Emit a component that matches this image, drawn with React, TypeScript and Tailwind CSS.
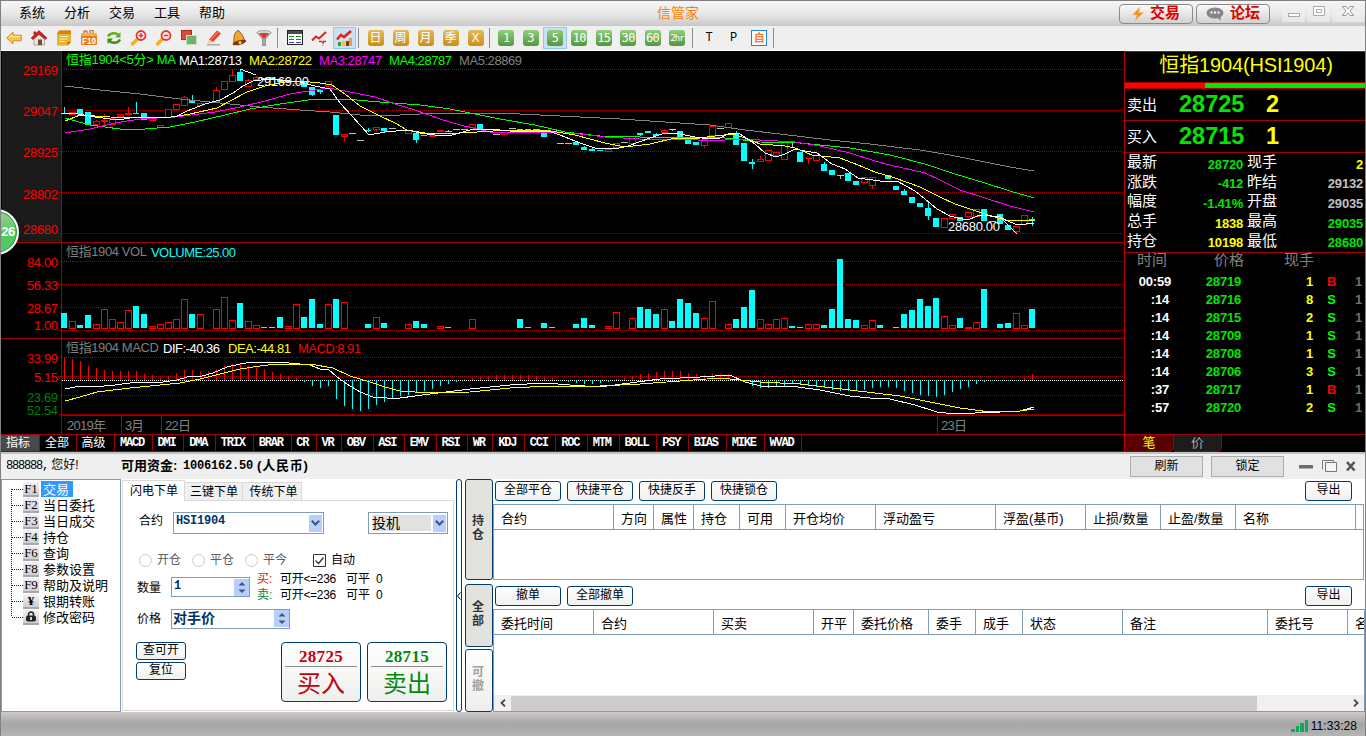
import type { ReactNode } from "react";
import clsx from "clsx";

/* ---------- Market data ---------- */

type Kind = "u" | "d" | "n"; // up (hollow red), down (cyan), flat
// index, kind, body top, body bottom, high, low
type Candle = [number, Kind, number, number, number?, number?];

const CANDLES: Candle[] = [
  [0, "d", 113, 114, 107], [1, "u", 112, 115], [2, "d", 109, 114], [3, "d", 112, 125], [4, "u", 121, 125, 120],
  [5, "u", 120, 122, 114, 126], [6, "u", 118, 125], [7, "u", 114, 117], [8, "u", 113, 115, 107], [9, "d", 113, 114, 102],
  [10, "d", 113, 120], [11, "u", 118, 121], [12, "u", 125, 128], [13, "u", 109, 118], [14, "u", 104, 110],
  [15, "u", 97, 106, 96], [16, "d", 100, 103, 95], [17, "u", 103, 106], [19, "u", 90, 102, 87], [20, "u", 81, 90],
  [21, "u", 75, 82, 70], [22, "d", 72, 81, 69], [23, "u", 80, 87, 79], [24, "u", 77, 80, 76], [25, "n", 78, 79],
  [26, "d", 77, 80], [27, "d", 79, 82], [28, "u", 81, 83], [29, "u", 83, 86, 82], [30, "d", 82, 87],
  [31, "d", 87, 95, 87, 96], [32, "d", 90, 92, 89, 94], [33, "u", 81, 87], [34, "d", 115, 135], [35, "u", 134, 137, 134, 141],
  [36, "n", 133, 134], [37, "n", 140, 141], [38, "d", 130, 131, 128, 132], [39, "u", 127, 130, 127, 132], [40, "d", 128, 131, 128, 132],
  [41, "n", 128, 129], [42, "n", 130, 131], [43, "u", 130, 134], [44, "d", 133, 140, 133, 143], [45, "d", 135, 136],
  [46, "u", 135, 137], [47, "u", 130, 132], [48, "n", 131, 132, 130], [49, "n", 129, 130], [50, "n", 129, 130],
  [51, "u", 124, 128], [52, "d", 124, 129], [53, "u", 131, 132], [54, "n", 134, 135], [55, "u", 132, 135],
  [56, "n", 128, 129], [57, "d", 129, 130], [58, "d", 129, 130], [59, "n", 129, 130], [60, "d", 132, 137],
  [62, "n", 143, 144], [63, "n", 143, 144], [64, "d", 142, 145], [65, "d", 147, 150, 146], [66, "d", 149, 151, 148],
  [67, "d", 150, 151], [68, "u", 149, 152], [69, "u", 143, 148], [70, "n", 142, 143], [71, "u", 136, 144],
  [72, "d", 133, 135, 133, 136], [73, "d", 131, 133], [74, "d", 134, 136, 133], [75, "u", 130, 133, 129, 134], [76, "n", 129, 130, 129, 131],
  [77, "d", 131, 137], [78, "d", 138, 144], [79, "d", 142, 145], [80, "u", 139, 146, 139, 148], [81, "u", 126, 136],
  [82, "n", 128, 129], [83, "u", 123, 128], [84, "d", 133, 145, 131], [85, "d", 143, 161], [86, "d", 162, 164, 159, 169],
  [87, "u", 159, 162, 156], [88, "u", 150, 161], [89, "u", 152, 156], [90, "u", 142, 160], [91, "n", 142, 143, 142, 147],
  [92, "d", 152, 162], [93, "u", 158, 159, 158, 164], [94, "u", 155, 161], [95, "d", 164, 171, 162], [96, "d", 170, 175],
  [97, "n", 175, 176, 175, 179], [98, "d", 173, 181], [99, "d", 181, 185], [100, "u", 177, 183], [101, "u", 177, 186, 177, 189],
  [103, "d", 175, 179], [104, "d", 186, 190], [105, "d", 191, 195, 189], [106, "d", 197, 203], [107, "d", 203, 207],
  [108, "d", 208, 216, 203, 220], [109, "d", 218, 227], [110, "u", 218, 228], [111, "u", 214, 219], [112, "d", 217, 221],
  [113, "u", 212, 217], [114, "u", 209, 217], [115, "d", 209, 221], [116, "n", 221, 222], [117, "d", 214, 224],
  [118, "d", 225, 230], [119, "u", 226, 232, 226, 234], [120, "u", 215, 225], [121, "d", 219, 221, 217, 226],
];

// index, kind, top of the bar
const VOLUMES: [number, Kind, number][] = [
  [0, "d", 313], [1, "u", 321], [2, "d", 325], [3, "d", 315], [4, "u", 324], [5, "u", 309], [6, "u", 319], [7, "u", 322],
  [8, "u", 310], [9, "d", 306], [10, "d", 314], [11, "u", 326], [12, "u", 324], [13, "u", 322], [14, "u", 319], [15, "u", 299],
  [16, "d", 314], [17, "u", 314], [19, "u", 309], [20, "u", 297], [21, "u", 320], [22, "d", 303], [23, "u", 321], [24, "u", 325],
  [25, "d", 327], [26, "d", 327], [27, "d", 317], [28, "u", 326], [29, "u", 304], [30, "d", 317], [31, "d", 299], [32, "d", 324],
  [33, "u", 304], [34, "d", 299], [35, "u", 302], [38, "d", 324], [39, "u", 317], [40, "d", 323], [43, "u", 324], [44, "d", 321],
  [45, "d", 324], [47, "u", 326], [48, "d", 327], [51, "u", 319], [57, "d", 319], [58, "d", 327], [60, "d", 323], [61, "d", 327],
  [64, "d", 324], [65, "d", 318], [66, "d", 325], [68, "u", 326], [69, "u", 312], [71, "u", 318], [72, "d", 307], [73, "d", 309],
  [74, "d", 314], [75, "u", 309], [76, "d", 321], [77, "d", 299], [78, "d", 303], [79, "d", 313], [80, "u", 318], [81, "u", 301],
  [83, "u", 324], [84, "d", 319], [85, "d", 307], [86, "d", 290], [87, "u", 319], [88, "u", 324], [89, "u", 319], [90, "u", 318],
  [91, "d", 326], [92, "d", 327], [93, "u", 324], [94, "u", 324], [95, "d", 325], [96, "d", 309], [97, "d", 259], [98, "d", 319],
  [99, "d", 320], [100, "u", 325], [101, "u", 320], [102, "d", 325], [104, "d", 327], [105, "d", 314], [106, "d", 310], [107, "d", 299],
  [108, "d", 306], [109, "d", 298], [110, "u", 316], [111, "u", 325], [112, "d", 318], [113, "u", 327], [114, "u", 322], [115, "d", 289],
  [117, "d", 324], [118, "d", 323], [119, "u", 313], [120, "u", 325], [121, "d", 309],
];

// end of each MACD bar, zero line at 380
const MACD = [
  357, 359, 361, 366, 368, 370, 371, 371, 371, 371, 374, 375, 378, 376, 373, 370, 370, 371, 371, 369,
  366, 364, 364, 366, 368, 369, 372, 374, 376, 378, 382, 386, 388, 386, 399, 406, 409, 411, 409, 405,
  402, 398, 396, 395, 393, 391, 389, 386, 384, 382, 379, 378, 377, 376, 375, 375, 375, 375, 375, 376,
  377, 378, 381, 382, 383, 384, 384, 383, 382, 379, 378, 376, 374, 373, 372, 371, 371, 371, 373, 374,
  375, 374, 374, 374, 377, 382, 386, 388, 388, 387, 386, 384, 384, 386, 387, 388, 390, 391, 391, 391,
  390, 388, 387, 387, 388, 391, 393, 395, 396, 397, 395, 392, 389, 387, 384, 382, 381, 381, 381, 381, 378, 374,
];

const MA_LINES = [
  {
    color: "#808080",
    points: "65,86 100,90 140,94 180,99 220,103 260,107 300,110 330,112 370,116 400,115 440,113 500,113 560,116 620,119 680,123 710,125 745,130 780,134 830,140 870,144 920,150 950,155 980,161 1010,167 1034,171",
  },
  {
    color: "#00ff00",
    points: "65,118 90,125 120,129 145,129 170,127 195,122 225,115 250,109 280,104 315,99 345,99 380,102 420,105 450,109 470,113 500,119 535,125 565,132 600,136 640,137 700,137 725,138 760,142 800,143 850,148 890,155 925,164 955,174 985,183 1010,191 1034,198",
  },
  {
    color: "#ff00ff",
    points: "65,133 90,129 115,123 140,119 175,117 215,112 240,107 265,101 290,94 315,90 328,88 345,91 375,97 395,104 415,110 440,119 460,125 490,132 545,132 580,134 605,137 640,139 680,139 715,141 735,139 760,140 795,142 820,146 850,153 875,161 890,165 925,173 940,180 960,190 985,198 1010,206 1034,212",
  },
  {
    color: "#ffff00",
    points: "65,121 80,115 110,117 165,118 190,114 217,108 230,101 247,92 265,86 285,82 300,81 320,83 332,85 345,94 360,106 380,116 395,123 407,130 425,133 460,133 510,130 545,130 575,135 605,143 625,147 650,144 675,138 700,138 715,136 733,134 745,138 760,144 785,146 795,148 812,155 840,158 858,165 875,172 895,178 920,187 940,197 955,204 970,209 985,214 1005,220 1034,220",
  },
  {
    color: "#ffffff",
    points: "62,113 78,114 95,117 118,120 130,118 150,117 165,118 177,116 187,111 205,104 220,100 233,93 243,86 253,81 270,79 300,82 315,86 330,89 340,103 352,116 369,135 385,132 408,130 420,133 435,135 452,135 470,130 490,129 510,131 548,131 560,135 580,143 595,148 615,149 628,146 650,138 665,133 680,134 695,137 710,139 720,138 730,133 740,134 755,144 765,153 776,157 785,154 795,149 805,151 817,153 832,164 845,169 858,178 880,181 897,181 915,191 925,199 937,209 950,216 962,219 970,219 980,215 1000,217 1010,222 1018,225 1034,223",
  },
];

const DIF_LINE =
  "65,389 80,386 93,387 115,385 137,382 163,382 177,380 187,377 202,376 213,373 227,367 240,364 253,362 277,362 300,364 310,365 320,369 328,369 337,377 347,384 360,392 373,397 387,398 400,398 430,394 470,389 510,385 545,383 570,385 600,387 630,383 660,379 700,377 730,375 745,382 765,387 790,386 820,390 850,396 870,398 890,399 915,405 937,412 955,414 975,413 1000,412 1020,411 1034,407";
const DEA_LINE =
  "65,401 80,397 97,392 130,388 160,385 180,383 200,379 220,374 240,369 260,366 277,364 310,364 333,368 350,376 370,382 385,387 400,391 430,393 470,392 510,388 550,386 600,386 640,384 680,381 720,378 760,382 800,384 850,390 900,396 930,402 960,408 990,412 1020,411 1034,409";

/* ---------- Chart ---------- */

const DARK_RED = "#a00000";

interface LabelProps {
  x: number;
  y: number;
  w: number;
  fill: string;
  size?: number;
  children: string;
}

function Label({ x, y, w, fill, size = 13, children }: LabelProps) {
  return (
    <text x={x} y={y} textLength={w} fill={fill} fontSize={size} className="font-['Liberation_Sans','Noto_Sans_CJK_SC',sans-serif]">
      {children}
    </text>
  );
}

function colorOf(kind: Kind) {
  if (kind === "u") return "#ff0000";
  return kind === "d" ? "#00ffff" : "#c0c0c0";
}

function Chart() {
  return (
    <svg width={1123} height={383} viewBox="1 51 1123 383" className="block shrink-0">
      <g shapeRendering="crispEdges">
        <rect x={1} y={51} width={1123} height={383} fill="#000" />
        <rect x={2} y={51} width={59} height={191} fill="#1a1a1a" />

        {/* Grid */}
        {[69, 110, 151, 192, 233, 261, 284, 307, 330, 357, 376, 395, 414].map((y) => (
          <line key={y} x1={58} x2={1124} y1={y + 0.5} y2={y + 0.5} stroke={DARK_RED} strokeDasharray="1 1" />
        ))}
        <line x1={62} x2={1124} y1={380.5} y2={380.5} stroke="#fff" strokeDasharray="1 1" />
        {[242, 338, 415].map((y) => (
          <line key={y} x1={y === 415 ? 61 : 1} x2={1124} y1={y + 0.5} y2={y + 0.5} stroke={DARK_RED} />
        ))}
        <line x1={61.5} x2={61.5} y1={51} y2={434} stroke={DARK_RED} />
        {[121.5, 161.5, 937.5].map((x) => (
          <line key={x} x1={x} x2={x} y1={415} y2={434} stroke={DARK_RED} />
        ))}

        {/* Candles */}
        {CANDLES.map(([i, kind, top, bottom, high = top, low = bottom]) => {
          const x = 61 + i * 8;
          const color = colorOf(kind);
          return (
            <g key={i}>
              {high < top && <rect x={x + 3} y={high} width={1} height={top - high} fill={color} />}
              {low > bottom && <rect x={x + 3} y={bottom} width={1} height={low - bottom} fill={color} />}
              {kind === "u" && bottom - top > 2 ? (
                <rect x={x + 0.5} y={top + 0.5} width={6} height={bottom - top - 1} fill="#000" stroke={color} />
              ) : (
                <rect x={x} y={top} width={kind === "d" ? 6 : 7} height={bottom - top} fill={color} />
              )}
            </g>
          );
        })}
        {MA_LINES.map((line) => (
          <polyline key={line.color} points={line.points} fill="none" stroke={line.color} />
        ))}
        <path d="M240 69L256 75M1000 217L1017 234" stroke="#fff" />

        {/* Volume */}
        {VOLUMES.map(([i, kind, top]) =>
          kind === "d" ? (
            <rect key={i} x={61 + i * 8} y={top} width={6} height={328 - top} fill="#00ffff" />
          ) : (
            <rect key={i} x={61.5 + i * 8} y={top + 0.5} width={6} height={328 - top} fill="#000" stroke="#ff0000" />
          )
        )}

        {/* MACD */}
        {MACD.map((end, i) => (
          <rect
            key={i}
            x={64 + i * 8}
            y={Math.min(end, 380)}
            width={1}
            height={Math.abs(380 - end)}
            fill={end < 380 ? "#ff0000" : "#00ffff"}
          />
        ))}
        <polyline points={DIF_LINE} fill="none" stroke="#fff" />
        <polyline points={DEA_LINE} fill="none" stroke="#ff0" />
      </g>

      {/* Price axis */}
      <Label x={23} y={75} w={35} fill="#f00">29169</Label>
      <Label x={23} y={116} w={35} fill="#f00">29047</Label>
      <Label x={23} y={157} w={35} fill="#f00">28925</Label>
      <Label x={23} y={199} w={35} fill="#f00">28802</Label>
      <Label x={23} y={234} w={35} fill="#f00">28680</Label>
      <Label x={27} y={267} w={31} fill="#f00">84.00</Label>
      <Label x={27} y={290} w={31} fill="#f00">56.33</Label>
      <Label x={27} y={313} w={31} fill="#f00">28.67</Label>
      <Label x={34} y={330} w={24} fill="#f00">1.00</Label>
      <Label x={27} y={363} w={31} fill="#f00">33.99</Label>
      <Label x={34} y={382} w={24} fill="#f00">5.15</Label>
      <Label x={27} y={402} w={31} fill="#008000">23.69</Label>
      <Label x={27} y={415} w={31} fill="#008000">52.54</Label>

      {/* Legends */}
      <Label x={66} y={64} w={110} fill="#0f0">恒指1904&lt;5分&gt; MA</Label>
      <Label x={179} y={65} w={63} fill="#fff">MA1:28713</Label>
      <Label x={249} y={65} w={63} fill="#ff0">MA2:28722</Label>
      <Label x={319} y={65} w={63} fill="#f0f">MA3:28747</Label>
      <Label x={389} y={65} w={63} fill="#0f0">MA4:28787</Label>
      <Label x={459} y={65} w={63} fill="#808080">MA5:28869</Label>
      <Label x={257} y={86} w={52} fill="#fff">29169.00</Label>
      <Label x={948} y={231} w={52} fill="#fff">28680.00</Label>
      <Label x={66} y={256} w={81} fill="#808080">恒指1904 VOL</Label>
      <Label x={151} y={257} w={85} fill="#0ff">VOLUME:25.00</Label>
      <Label x={66} y={352} w={93} fill="#808080">恒指1904 MACD</Label>
      <Label x={163} y={353} w={57} fill="#fff">DIF:-40.36</Label>
      <Label x={228} y={353} w={63} fill="#ff0">DEA:-44.81</Label>
      <Label x={298} y={353} w={63} fill="#f00">MACD:8.91</Label>

      {/* Dates */}
      <Label x={67} y={430} w={39} fill="#808080">2019年</Label>
      <Label x={125} y={430} w={19} fill="#808080">3月</Label>
      <Label x={165} y={430} w={26} fill="#808080">22日</Label>
      <Label x={941} y={430} w={26} fill="#808080">23日</Label>
    </svg>
  );
}

/* ---------- Title bar and toolbar ---------- */

function TitleBar() {
  return (
    <div className="h-[25px] shrink-0 flex items-center bg-gradient-to-b from-[#f6f6f6] via-[#e8e8e8] to-[#c9c9c9]">
      <div className="flex w-[656px] pl-[18px] text-[13px] -mt-0.5">
        {["系统", "分析", "交易", "工具", "帮助"].map((item) => (
          <span key={item} className="w-[45px]">{item}</span>
        ))}
      </div>
      <span className="flex-1 text-[14px] text-[#ff8000]">信管家</span>
      <div className="flex gap-[3px]">
        <button className="w-[74px] h-5 rounded-[4px] border border-[#8a8a8a] bg-gradient-to-b from-[#fafafa] to-[#d2d2d2] flex items-center justify-center gap-1.5 text-[15px] font-bold text-[#e00000]">
          <svg width="12" height="16" viewBox="0 0 12 16">
            <path d="M8 1L0.500 9H5L2.500 15L11.500 6.500H6.500Z" fill="#f88a1c" stroke="#fbc27a" strokeWidth=".6" />
          </svg>
          交易
        </button>
        <button className="w-[74px] h-5 rounded-[4px] border border-[#8a8a8a] bg-gradient-to-b from-[#fafafa] to-[#d2d2d2] flex items-center justify-center gap-1.5 text-[15px] font-bold text-[#e00000]">
          <svg width="18" height="14" viewBox="0 0 18 14">
            <ellipse cx="9" cy="6" rx="8.500" ry="5.500" fill="#868686" />
            <path d="M10 10L15 13.500L14 8Z" fill="#868686" />
            <path d="M4.500 5.500h2M8 5.500h2M11.500 5.500h2" stroke="#fff" strokeWidth="2" />
          </svg>
          论坛
        </button>
      </div>
      <div className="flex gap-0.5 ml-3 mr-px mb-0.5">
        <span className="w-[23px] h-[19px] bg-[#efefef]/70 flex items-end justify-center pb-1">
          <svg width="12" height="5"><rect x=".5" y=".5" width="11" height="3" fill="#fff" stroke="#aaa" /></svg>
        </span>
        <span className="w-[23px] h-[19px] bg-[#efefef]/70 flex items-center justify-center pb-1">
          <svg width="12" height="10"><path d="M.5.5h11v9H.5zM3.500 3.500h5v3h-5z" fill="#fff" stroke="#aaa" /></svg>
        </span>
        <span className="w-[32px] h-[19px] bg-[#efefef]/70 flex items-center justify-center pb-1">
          <svg width="12" height="10">
            <path d="M.5.5h3.500L6 3L8 .5h3.500L8 5l3.500 4.500H8L6 7L4 9.500H.5L4 5z" fill="#fff" stroke="#999" />
          </svg>
        </span>
      </div>
    </div>
  );
}

function Magnifier({ plus }: { plus?: boolean }) {
  return (
    <svg width="16" height="16" viewBox="0 0 16 16">
      <path d="M1.500 14L6.500 9" stroke="#f6b21c" strokeWidth="3.500" strokeLinecap="round" />
      <circle cx="10" cy="5.500" r="4.500" fill="#fbeaea" stroke="#e5372d" strokeWidth="1.800" />
      <path d={plus ? "M7.800 5.500h4.400M10 3.300v4.400" : "M7.800 5.500h4.400"} stroke="#e5372d" strokeWidth="1.500" />
    </svg>
  );
}

const TOOL_ICONS: ReactNode[] = [
  <svg width="16" height="16" viewBox="0 0 16 16">
    <path d="M.7 8L7 2V5.200H15.300V10.800H7V14Z" fill="#fcc63c" stroke="#c98a17" strokeWidth=".9" />
    <path d="M3 7.500L6 5V6.500H14" stroke="#fff0a8" fill="none" />
  </svg>,
  <svg width="16" height="16" viewBox="0 0 16 16">
    <path d="M3 7.500V15H13.500V7.500L8 3Z" fill="#e6e6e6" stroke="#8b8b8b" strokeWidth=".7" />
    <path d="M2.500 1.500h2.500v3H2.500z" fill="#b52020" />
    <path d="M0 8L8 .5L16 8L14 9.500L8 4.500L2 9.500Z" fill="#d81e1e" stroke="#8e0f0f" strokeWidth=".5" />
    <path d="M7 9.500h4V15H7z" fill="#7b4a2a" />
  </svg>,
  <svg width="16" height="16" viewBox="0 0 16 16">
    <path d="M3 .5H15V12L11.500 15.500H1V4Z" fill="#eab32b" />
    <path d="M3 .5H15V4H1Z" fill="#c98a10" />
    <path d="M11.500 15.500V12H15Z" fill="#a87209" />
    <path d="M4 6.500h8M3.500 9h8M3.500 11.500h5" stroke="#fff1b8" />
  </svg>,
  <svg width="16" height="16" viewBox="0 0 16 16">
    <path d="M3 3V1h3v2M9 3V0h3v3" fill="none" stroke="#9c4a16" />
    <rect x="0" y="3" width="16" height="12" rx="1" fill="#ef7a1a" />
    <rect x="0" y="3" width="16" height="3" fill="#f7b13c" />
    <text x="1" y="13.500" fontSize="9" fontWeight="bold" textLength="14" lengthAdjust="spacingAndGlyphs" fill="#fff">F10</text>
  </svg>,
  <svg width="16" height="16" viewBox="0 0 16 16" fill="none" strokeWidth="2.600">
    <path d="M2 6.500C4 2.500 10 2.500 12.500 5" stroke="#63ad26" />
    <path d="M14 9.500C12 13.500 6 13.500 3.500 11" stroke="#3f8f1a" />
    <path d="M14.500 2V7.500H9Z" fill="#63ad26" stroke="none" />
    <path d="M1.500 14V8.500H7Z" fill="#3f8f1a" stroke="none" />
  </svg>,
  <Magnifier plus />,
  <Magnifier />,
  <svg width="16" height="16" viewBox="0 0 16 16">
    <rect x=".5" y=".5" width="10" height="9" fill="#e0483e" stroke="#b3261f" />
    <rect x="5.500" y="5.500" width="10" height="9" fill="#74b06c" stroke="#bfe0bb" />
  </svg>,
  <svg width="16" height="16" viewBox="0 0 16 16">
    <path d="M3 9.500L11 .5L15 3.500L7 12Z" fill="#e04428" />
    <path d="M3 9.500L7 12L1.500 14Z" fill="#f2c79a" />
    <path d="M1 14.800H14" stroke="#999" strokeWidth="1.200" />
    <path d="M5 9.500L12.500 1.500" stroke="#f59a7c" />
  </svg>,
  <svg width="16" height="16" viewBox="0 0 16 16">
    <path d="M6 1C7 0 9 1 9 2.500C13 5 11.500 9 15 11L2 15C4 10 1.500 5 6 1Z" fill="#f1a62c" stroke="#7b3f0c" strokeWidth=".8" />
    <ellipse cx="8.500" cy="12.500" rx="6.500" ry="2.300" transform="rotate(-14 8.500 12.500)" fill="#7a350a" />
    <circle cx="9" cy="12.500" r="1.600" fill="#f6cf4a" />
  </svg>,
  <svg width="16" height="16" viewBox="0 0 16 16">
    <path d="M1 2.500L6.500 9V15.500H9.500V9L15 2.500Z" fill="#a9a9a9" stroke="#777" strokeWidth=".7" />
    <ellipse cx="8" cy="2.800" rx="7" ry="2.300" fill="#d8d8d8" stroke="#888" strokeWidth=".7" />
    <path d="M3 3H13L8 9Z" fill="#e2352c" />
  </svg>,
];

const CHART_ICONS: ReactNode[] = [
  <svg width="16" height="16" viewBox="0 0 16 16" shapeRendering="crispEdges">
    <rect x=".5" y=".5" width="15" height="14" fill="#fff" stroke="#222" />
    <path d="M1 1h14v3H1z" fill="#4a4a4a" />
    <path d="M2 6.500h5M9 6.500h5" stroke="#1d8b2c" />
    <path d="M2 9.500h5M9 9.500h5" stroke="#d22" />
    <path d="M2 12.500h5M9 12.500h5" stroke="#2b3fa8" />
  </svg>,
  <svg width="17" height="16" viewBox="0 0 17 16">
    <path d="M1 10.500L5 6.500L8 8.500L15 2" stroke="#e0231c" strokeWidth="2" fill="none" />
    <path d="M8 11.500h8M12 11v4.500" stroke="#e0231c" strokeWidth="1.400" strokeDasharray="3 1" />
  </svg>,
  <svg width="17" height="17" viewBox="0 0 17 17">
    <path d="M2 12h3v4H2z" fill="#2c9a3f" />
    <path d="M6 11h3v5H6z" fill="#f1c232" />
    <path d="M10 11h3v5h-3z" fill="#7c3a1a" />
    <path d="M13 8h3v8h-3z" fill="#e9a13a" />
    <path d="M1 9.500L5 5L8 7L15 1" stroke="#e0231c" strokeWidth="2.600" fill="none" />
  </svg>,
];

function Separator() {
  return <span className="w-1.5 pl-px flex"><i className="w-px h-5 bg-[#8c8c8c]" /></span>;
}

function PeriodIcon({ label, tone, active }: { label: string; tone: "gold" | "green"; active?: boolean }) {
  return (
    <span className={clsx("h-[22px] flex items-center justify-center", tone === "gold" ? "w-[25px]" : "w-[24.4px]", active && "bg-[#c9e0f5] border border-[#90c8f6]")}>
      <span
        className={clsx(
          "size-4 rounded-[3px] flex items-center justify-center leading-none text-white whitespace-nowrap",
          tone === "gold" && "bg-gradient-to-b from-[#e0bb55] to-[#cc8f0a] text-[12px]",
          tone === "green" && "bg-gradient-to-b from-[#8fce7a] to-[#55963f] font-['DejaVu_Sans_Mono',monospace]",
          tone === "green" && (label === "2hr" ? "text-[9px] tracking-[-0.9px]" : "text-[12px] tracking-[-0.6px]")
        )}
      >
        {label}
      </span>
    </span>
  );
}

function Toolbar() {
  return (
    <div className="h-6 shrink-0 flex items-center bg-[#efefef]">
      {TOOL_ICONS.map((icon, idx) => (
        <span key={idx} className="w-[25px] flex justify-center">{icon}</span>
      ))}
      <Separator />
      {CHART_ICONS.map((icon, idx) => (
        <span key={idx} className={clsx("h-[22px] flex items-center justify-center", idx === 2 ? "w-[23px] mx-px bg-[#c9e0f5] border border-[#90c8f6]" : "w-[25px]")}>
          {icon}
        </span>
      ))}
      <Separator />
      {["日", "周", "月", "季", "X"].map((label) => (
        <PeriodIcon key={label} label={label} tone="gold" />
      ))}
      <Separator />
      {["1", "3", "5", "10", "15", "30", "60", "2hr"].map((label) => (
        <PeriodIcon key={label} label={label} tone="green" active={label === "5"} />
      ))}
      <span className="w-0.5" />
      <Separator />
      <span className="w-6 text-center text-[12px] font-['Liberation_Mono',monospace]">T</span>
      <span className="w-[25px] text-center text-[12px] font-['Liberation_Mono',monospace]">P</span>
      <span className="w-[26px] flex justify-center">
        <span className="size-4 border border-[#1c86d8] bg-white text-[#f08030] text-[11px] font-bold leading-none flex items-center justify-center">自</span>
      </span>
      <Separator />
    </div>
  );
}

/* ---------- Quote panel ---------- */

const QUOTES = [
  ["最新", "28720", "text-[#00e600]", "现手", "2", "text-[#ffff00]"],
  ["涨跌", "-412", "text-[#00e600]", "昨结", "29132", "text-[#c0c0c0]"],
  ["幅度", "-1.41%", "text-[#00e600]", "开盘", "29035", "text-[#c0c0c0]"],
  ["总手", "1838", "text-[#ffff00]", "最高", "29035", "text-[#00e600]"],
  ["持仓", "10198", "text-[#ffff00]", "最低", "28680", "text-[#00e600]"],
];

const TICKS = [
  ["00:59", "28719", "1", "B"],
  [":14", "28716", "8", "S"],
  [":14", "28715", "2", "S"],
  [":14", "28709", "1", "S"],
  [":14", "28708", "1", "S"],
  [":14", "28706", "3", "S"],
  [":37", "28717", "1", "B"],
  [":57", "28720", "2", "S"],
];

function QuotePanel() {
  return (
    <div className="w-[241px] h-[401px] shrink-0 bg-black border-l border-t border-[#c00000] flex flex-col leading-none whitespace-nowrap">
      <div className="h-[30px] pb-[5px] pl-0.5 flex items-center justify-center text-[20px] text-[#ffff00] tracking-[-0.15px]">恒指1904(HSI1904)</div>
      <div className="h-[7px] border-y border-[#a00000] flex">
        <span className="w-20 bg-[#ff0000]" />
        <span className="flex-1 bg-[#00e600]" />
      </div>
      {[["卖出", "28725", "2"], ["买入", "28715", "1"]].map(([name, price, lots]) => (
        <div key={name} className="h-8 border-b border-[#a00000] flex items-center pl-0.5 text-white">
          <span className="w-[52px] text-[15px]">{name}</span>
          <span className="w-[87px] text-[23.5px] font-bold text-[#00e600]">{price}</span>
          <span className="text-[23.5px] font-bold text-[#ffff00]">{lots}</span>
        </div>
      ))}
      <div className="h-[100px] border-b border-[#a00000] flex flex-col">
        {QUOTES.map(([name, value, color, name2, value2, color2]) => (
          <div key={name} className="h-[19.6px] flex items-center pl-0.5 pr-0.5 text-white text-[15px]">
            <span className="w-[46px] pb-0.5">{name}</span>
            <span className={clsx("w-[70px] text-right text-[13px] font-bold tracking-[-0.2px] pt-[3px]", color)}>{value}</span>
            <span className="pl-1 pb-0.5">{name2}</span>
            <span className={clsx("flex-1 text-right text-[13px] font-bold tracking-[-0.2px] pt-[3px]", color2)}>{value2}</span>
          </div>
        ))}
      </div>
      <div className="h-[19px] shrink-0 flex items-center pb-[7px] text-[15px] text-[#808080]">
        <span className="pl-3 w-[89px]">时间</span>
        <span className="w-[70px]">价格</span>
        <span>现手</span>
      </div>
      <div className="h-[163px] shrink-0 border-b border-[#a00000] text-[13px] font-bold">
        {TICKS.map(([time, price, lots, side], idx) => (
          <div key={idx} className="h-[18px] flex items-center tracking-[-0.2px]">
            <span className={clsx("text-white text-right", idx === 0 ? "w-[46px]" : "w-11 mr-0.5")}>{time}</span>
            <span className="w-[70px] text-right text-[#00e600]">{price}</span>
            <span className="w-[72px] text-right text-[#ffff00]">{lots}</span>
            <span className={clsx("w-[37px] text-center", side === "B" ? "text-[#ff0000]" : "text-[#00ff00]")}>{side}</span>
            <span className="w-3 text-right text-[#707070]">1</span>
          </div>
        ))}
      </div>
      <div className="h-[17px] flex text-[13px]">
        <span className="w-[49px] border-r border-b border-[#a00000] bg-[#580000] text-[#ffff00] flex items-center justify-center rounded-br-[5px] pb-0.5">笔</span>
        <span className="w-[48px] border-r border-b border-[#a00000] bg-[#1c1c1c] text-[#a8a8a8] flex items-center justify-center rounded-br-[5px] pb-0.5">价</span>
      </div>
    </div>
  );
}

const INDICATORS = [
  "MACD", "DMI", "DMA", "TRIX", "BRAR", "CR", "VR", "OBV", "ASI", "EMV", "RSI",
  "WR", "KDJ", "CCI", "ROC", "MTM", "BOLL", "PSY", "BIAS", "MIKE", "WVAD",
];

function IndicatorTabs() {
  return (
    <div className="h-[18px] bg-black border-y border-[#a00000] flex text-white leading-none">
      <span className="w-[39px] pr-1 border-r border-[#a00000] bg-[#484848] flex items-center justify-center text-[12px]">指标</span>
      <span className="w-[37px] pr-0.5 border-r border-[#a00000] flex items-center justify-center text-[12px]">全部</span>
      <span className="w-[38px] pr-1 border-r border-[#a00000] flex items-center justify-center text-[12px]">高级</span>
      {INDICATORS.map((name) => (
        <span
          key={name}
          className={clsx(
            "border-r border-[#a00000] pr-[3px] flex items-center justify-center font-['Liberation_Mono',monospace] font-bold text-[12px] tracking-[-1.200px]",
            name.length === 4 && "w-[37.850px]",
            name.length === 3 && "w-[31.550px]",
            name.length === 2 && "w-[25.200px]"
          )}
        >
          {name}
        </span>
      ))}
    </div>
  );
}

/* ---------- Trading panel ---------- */

const MENU = [
  ["F1", "交易"],
  ["F2", "当日委托"],
  ["F3", "当日成交"],
  ["F4", "持仓"],
  ["F6", "查询"],
  ["F8", "参数设置"],
  ["F9", "帮助及说明"],
  ["¥", "银期转账"],
  ["lock", "修改密码"],
];

function MenuTree() {
  return (
    <div className="w-[120px] shrink-0 h-[233px] border border-[#7f9db9] bg-white pt-px text-[13px] leading-none whitespace-nowrap">
      {MENU.map(([key, label], idx) => (
        <div key={key} className="h-4 flex items-center">
          <svg width="21" height="16" shapeRendering="crispEdges" className="shrink-0">
            <path d={idx === 0 ? "M9.500 8V16" : idx === 8 ? "M9.500 0V8" : "M9.500 0V16"} stroke="#222" strokeDasharray="1 1" />
            <path d="M10 8.500H21" stroke="#222" strokeDasharray="1 1" />
          </svg>
          <span className="w-4 h-[15px] bg-gradient-to-b from-[#f2f2f2] to-[#cfcfcf] border-b-2 border-[#a8a8a8] flex items-center justify-center font-['Liberation_Serif',serif] text-[13px]">
            {key === "lock" ? (
              <svg width="10" height="11" viewBox="0 0 10 11">
                <path d="M2.500 5V3.500a2.500 2.500 0 0 1 5 0V5" stroke="#222" strokeWidth="1.500" fill="none" />
                <rect y="4.500" width="10" height="6" rx="2" fill="#222" />
                <rect x="4.200" y="6" width="1.600" height="3" fill="#fff" />
              </svg>
            ) : (
              <span className={clsx(key === "¥" && "font-bold")}>{key}</span>
            )}
          </span>
          <span className={clsx("h-4 ml-0.5 pl-0.5 pr-1 flex items-center", idx === 0 && "bg-[#3399ff] text-white")}>{label}</span>
        </div>
      ))}
    </div>
  );
}

function Chevron() {
  return (
    <span className="w-[13px] h-[17px] bg-[#b8cefc] flex items-center justify-center">
      <svg width="9" height="6" viewBox="0 0 9 6"><path d="M.8.8L4.500 4.500L8.200.8" stroke="#3d5580" strokeWidth="2" fill="none" /></svg>
    </span>
  );
}

function Spinner() {
  return (
    <span className="w-[15px] h-[17px] bg-[#b8cefc] flex items-center justify-center">
      <svg width="8" height="13" viewBox="0 0 8 13"><path d="M.5 4.500L4 1L7.500 4.500zM.5 8.500L4 12L7.500 8.500z" fill="#3d5580" /></svg>
    </span>
  );
}

function SmallButton({ className, children }: { className?: string; children: ReactNode }) {
  return (
    <button className={clsx("shrink-0 rounded-[3px] border border-[#003c74] bg-gradient-to-b from-white to-[#f0f0ee] text-[12px] leading-none flex items-center justify-center pb-0.5", className)}>
      {children}
    </button>
  );
}

function OrderForm() {
  return (
    <div className="w-[332px] ml-px shrink-0 h-[233px] bg-white flex flex-col text-[12px] leading-none whitespace-nowrap">
      {/* Tabs */}
      <div className="h-[22px] shrink-0 flex items-end">
        <span className="w-[63px] h-[21px] border-t border-x border-[#d9d9d9] pl-[7px] pt-1">闪电下单</span>
        <span className="w-[58px] h-[19px] pl-px border border-l-0 border-[#d9d9d9] bg-[#f0f0f0] flex items-center justify-center">三键下单</span>
        <span className="w-[59px] h-[19px] pl-[3px] border border-l-0 border-[#d9d9d9] bg-[#f0f0f0] flex items-center justify-center">传统下单</span>
        <span className="flex-1 border-b border-[#d9d9d9]" />
      </div>
      <div className="h-[210px] border-x border-b border-[#d9d9d9]">
        {/* Contract */}
        <div className="h-8 pt-[11px] pl-4 flex">
          <span className="w-[34px] pt-[3px]">合约</span>
          <span className="w-[151px] h-[22px] shrink-0 border border-[#7f9db9] flex items-center justify-between pl-0.5 pr-px">
            <b className="font-['Liberation_Mono',monospace] text-[12px] tracking-[-0.2px] text-[#003366] pb-1">HSI1904</b>
            <Chevron />
          </span>
          <span className="w-20 h-[22px] ml-11 shrink-0 border border-[#7f9db9] flex items-center justify-between pl-[3px] pr-px">
            <span className="w-[59px] h-4 bg-[#e1e1e1] text-[14px] flex items-center">投机</span>
            <Chevron />
          </span>
        </div>
        {/* Open / close */}
        <div className="h-[38px] pt-4 pl-4 flex items-center text-[#606060]">
          {["开仓", "平仓", "平今"].map((label) => (
            <span key={label} className="w-[53px] flex items-center gap-[5px]">
              <i className="size-[13px] rounded-full border border-[#ccc] bg-white" />
              {label}
            </span>
          ))}
          <span className="ml-[15px] flex items-center gap-[5px] text-black">
            <svg width="13" height="13"><path d="M.5.5h12v12H.5z" fill="#fff" stroke="#333" /><path d="M2.500 6.500L5.500 9.500L10.500 3.500" fill="none" stroke="#333" strokeWidth="1.300" /></svg>
            自动
          </span>
        </div>
        {/* Quantity */}
        <div className="h-8 pl-3.5 flex items-center">
          <span className="w-[34px] pt-0.5">数量</span>
          <span className="w-[79px] h-5 border border-[#7f9db9] flex items-center justify-between pl-0.5">
            <b className="font-['Liberation_Mono',monospace] text-[#003366] pb-0.5">1</b>
            <Spinner />
          </span>
          <span className="ml-[7px] flex flex-col gap-1">
            <span className="flex"><i className="not-italic w-[23px] text-[#ff0000]">买:</i><span className="w-[66px] tracking-[-0.3px]">可开&lt;=236</span><span className="w-[30px]">可平</span>0</span>
            <span className="flex"><i className="not-italic w-[23px] text-[#108030]">卖:</i><span className="w-[66px] tracking-[-0.3px]">可开&lt;=236</span><span className="w-[30px]">可平</span>0</span>
          </span>
        </div>
        {/* Price */}
        <div className="h-[31px] pl-3.5 flex items-center">
          <span className="w-[34px]">价格</span>
          <span className="w-[119px] h-5 border border-[#7f9db9] flex items-center justify-between pl-px">
            <b className="text-[14px] text-[#003366] pb-0.5">对手价</b>
            <Spinner />
          </span>
        </div>
        <div className="mt-2 pl-[13px] flex">
          <div className="w-[145px] flex flex-col gap-0.5">
            <SmallButton className="w-[50px] h-[18px]">查可开</SmallButton>
            <SmallButton className="w-[50px] h-[18px]">复位</SmallButton>
          </div>
          <button className="w-20 h-[60px] rounded-[4px] border border-[#003c74] bg-gradient-to-b from-white to-[#efefed] px-[3px] text-[#c40010] flex flex-col items-stretch text-center">
            <span className="h-6 pt-1 border-b border-[#8c8c8c] font-['Liberation_Serif',serif] font-bold text-[17px] tracking-[0.3px] leading-[20px]">28725</span>
            <span className="text-[24px] pt-[5px]">买入</span>
          </button>
          <button className="w-20 h-[60px] ml-1.5 rounded-[4px] border border-[#003c74] bg-gradient-to-b from-white to-[#efefed] px-[3px] text-[#008a10] flex flex-col items-stretch text-center">
            <span className="h-6 pt-1 border-b border-[#8c8c8c] font-['Liberation_Serif',serif] font-bold text-[17px] tracking-[0.3px] leading-[20px]">28715</span>
            <span className="text-[24px] pt-[5px]">卖出</span>
          </button>
        </div>
      </div>
    </div>
  );
}

function SideTabs() {
  return (
    <div className="w-7 shrink-0 flex flex-col text-[12px] leading-[14px] font-bold text-center text-[#333]">
      <span className="h-[101px] mb-1 pr-0.5 rounded-[3px] border border-[#003c74] bg-[#e3e3de] flex flex-col justify-center pb-1"><span>持</span><span>仓</span></span>
      <span className="h-[63px] mb-0.5 pr-0.5 rounded-[3px] border border-[#003c74] bg-[#e3e3de] flex flex-col justify-center pb-1"><span>全</span><span>部</span></span>
      <span className="h-[63px] pr-0.5 rounded-[3px] border border-[#003c74] bg-gradient-to-b from-white to-[#eee] text-[#a0a0a0] flex flex-col justify-center pb-1"><span>可</span><span>撤</span></span>
    </div>
  );
}

const POSITION_COLS = [
  ["合约", 120], ["方向", 40], ["属性", 40], ["持仓", 46], ["可用", 46], ["开仓均价", 90],
  ["浮动盈亏", 120], ["浮盈(基币)", 90], ["止损/数量", 75], ["止盈/数量", 75], ["名称", 120],
] as const;

const ORDER_COLS = [
  ["委托时间", 100], ["合约", 120], ["买卖", 100], ["开平", 40], ["委托价格", 75], ["委手", 47],
  ["成手", 47], ["状态", 100], ["备注", 145], ["委托号", 80],
] as const;

function HeaderRow({ cols, last }: { cols: readonly (readonly [string, number])[]; last?: string }) {
  return (
    <div className="h-[26px] shrink-0 border-y border-[#7f9db9] flex text-[13px] leading-none whitespace-nowrap overflow-hidden">
      {cols.map(([name, width]) => (
        <span key={name} className="shrink-0 border-r border-[#7f9db9] pl-[7px] pt-0.5 flex items-center" style={{ width }}>
          {name}
        </span>
      ))}
      {last && <span className="pl-[7px] pt-0.5 flex items-center">{last}</span>}
    </div>
  );
}

function Tables() {
  return (
    <div className="flex-1 min-w-0 flex flex-col">
      <div className="h-[25px] shrink-0 pt-0.5 pl-0.5 flex gap-1.5">
        {["全部平仓", "快捷平仓", "快捷反手", "快捷锁仓"].map((label) => (
          <SmallButton key={label} className="w-[66px] h-5">{label}</SmallButton>
        ))}
        <SmallButton className="w-[47px] h-5 ml-auto mr-[13px]">导出</SmallButton>
      </div>
      <div className="h-[76px] mr-px shrink-0 border-x border-b border-[#7f9db9]">
        <HeaderRow cols={POSITION_COLS} />
      </div>
      <div className="h-[29px] shrink-0 pt-[6px] pl-0.5 flex gap-1.5">
        <SmallButton className="w-[66px] h-5">撤单</SmallButton>
        <SmallButton className="w-[66px] h-5">全部撤单</SmallButton>
        <SmallButton className="w-[47px] h-5 ml-auto mr-[13px]">导出</SmallButton>
      </div>
      <div className="flex-1 border-x border-b border-[#7f9db9] flex flex-col justify-between">
        <HeaderRow cols={ORDER_COLS} last="名" />
        <div className="h-4 bg-[#f0f0f0] flex items-center">
          <span className="w-[17px] flex justify-center">
            <svg width="6" height="8"><path d="M5 .7L1.500 4L5 7.300" stroke="#444" strokeWidth="1.800" fill="none" /></svg>
          </span>
          <span className="w-[746px] h-[15px] bg-[#cdcdcd]" />
          <span className="flex-1 flex justify-end pr-[5px]">
            <svg width="6" height="8"><path d="M1 .7L4.500 4L1 7.300" stroke="#444" strokeWidth="1.800" fill="none" /></svg>
          </span>
        </div>
      </div>
    </div>
  );
}

function TradePanel() {
  return (
    <div className="h-[260px] shrink-0 flex flex-col bg-white border-t-2 border-[#c0c0c0]">
      <div className="h-[25px] shrink-0 bg-[#efefef] flex items-center text-[12px] leading-none whitespace-nowrap">
        <span className="w-[120px] pl-[5px] pb-0.5">
          <span className="font-['Liberation_Mono',monospace] text-[12px] tracking-[-1.200px]">888888,</span> 您好!
        </span>
        <span className="flex-1 flex items-center pb-0.5 text-[13px] font-bold">
          <span className="w-[62px]">可用资金:</span>
          <span className="w-[74px] font-['Liberation_Mono',monospace] text-[12px] tracking-[-0.2px]">1006162.50</span>
          <span className="tracking-[0.8px]">(人民币)</span>
        </span>
        <span className="w-[73px] h-[21px] pb-0.5 border border-[#adadad] bg-[#e1e1e1] flex items-center justify-center">刷新</span>
        <span className="w-[73px] h-[21px] pb-0.5 ml-2 border border-[#adadad] bg-[#e1e1e1] flex items-center justify-center">锁定</span>
        <svg width="70" height="22" viewBox="-2 1 70 22" className="ml-2.5 mr-px">
          <path d="M3 10h14v3.500H3z" fill="#6c6c6c" />
          <path d="M26.500 14.500v-9h11v2M29.500 7.500h11v9h-11z" fill="#f4f4f4" stroke="#777" />
          <path d="M51 7l7.500 8.500M58.500 7L51 15.500" stroke="#555" strokeWidth="2.600" />
        </svg>
      </div>
      <div className="h-[233px] flex">
        <MenuTree />
        <OrderForm />
        <div className="w-1.5 ml-0.5 mr-[3px] shrink-0 rounded-[3px] border border-[#003c74] flex items-center justify-center">
          <svg width="4" height="8" className="shrink-0"><path d="M3.500 .5L.5 4L3.500 7.500" stroke="#000" fill="none" /></svg>
        </div>
        <SideTabs />
        <Tables />
      </div>
    </div>
  );
}

function StatusBar() {
  return (
    <div className="h-6 shrink-0 bg-gradient-to-b from-[#cfc9c9] via-[#a6a6a6] to-[#b4b4b4] flex items-center justify-end pr-2 pt-1 gap-[3px] text-[12px]">
      <svg width="17" height="12" shapeRendering="crispEdges"><path d="M0 9h4v3H0zM5 6h3v6H5zM9 3h4v9H9zM14 0h3v12h-3z" fill="#12a85c" /></svg>
      <span className="tracking-[0.05px]">11:33:28</span>
    </div>
  );
}

export default function App() {
  return (
    <div className="relative w-[1366px] h-[736px] overflow-hidden flex flex-col border-t border-x border-[#808080] bg-white text-black font-['Liberation_Sans','Noto_Sans_CJK_SC',sans-serif]">
      <TitleBar />
      <Toolbar />
      <div className="h-[402px] pt-px shrink-0 flex">
        <div className="w-[1123px] shrink-0">
          <Chart />
          <IndicatorTabs />
        </div>
        <QuotePanel />
      </div>
      <TradePanel />
      <StatusBar />

      {/* Floating badge, half outside the window */}
      <div className="absolute left-[-28px] top-[208px] size-[46px] rounded-full border-2 border-white bg-gradient-to-b from-[#9ccf90] via-[#4fcb62] to-[#4fcb62] shadow-[inset_0_0_0_1px_#1f9a52] flex items-center justify-end pr-0.5 text-[13px] font-bold text-white tracking-[-0.3px]">
        26
      </div>
    </div>
  );
}
